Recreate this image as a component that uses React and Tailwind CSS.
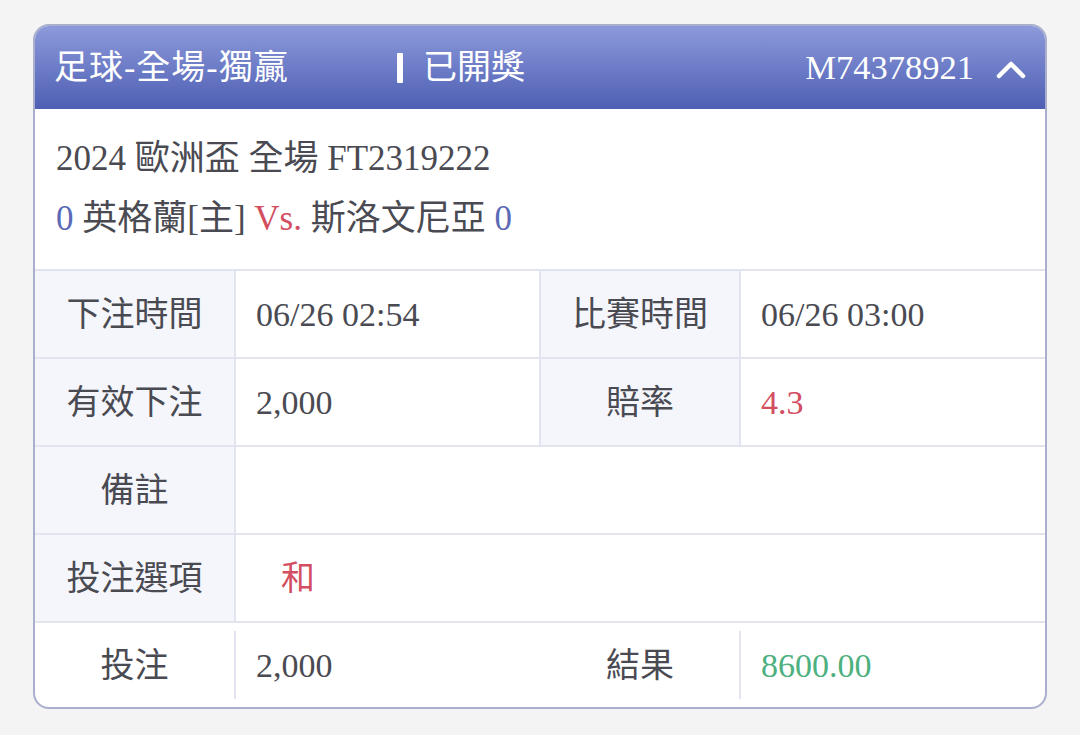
import React from "react";

const F = { fontFamily: '"Liberation Serif", "Noto Sans CJK TC", serif' };

function Chevron() {
  return (
    <svg width="32" height="24" viewBox="0 0 32 24" className="block">
      <polyline points="4,20 16,8 28,20" fill="none" stroke="white" strokeWidth="4.5" strokeLinecap="round" strokeLinejoin="round" />
    </svg>
  );
}

export default function App() {
  return (
    <div className="min-h-[735px] w-[1080px] bg-[#f4f4f5] pt-[24px] pl-[33px] text-[#4a4a52]" style={F}>
      <div className="w-[1014px] rounded-[16px] border-2 border-[#a9afcc] bg-white overflow-hidden">
        {/* header */}
        <div className="h-[85px] flex items-center bg-gradient-to-b from-[#8e9bdb] to-[#4f5fb3] text-white pl-[21px] pr-[20px] -mt-[2px] -mx-[2px] pt-[2px]">
          <div className="w-[343px] text-[34px] leading-none tracking-[1px]">足球-全場-獨贏</div>
          <div className="flex items-center gap-[20px]">
            <span className="w-[6px] h-[30px] bg-white rounded-[1px]"></span>
            <span className="text-[34px] leading-none">已開獎</span>
          </div>
          <div className="ml-auto flex items-center gap-[21px]">
            <span className="text-[34.5px] leading-none">M74378921</span>
            <Chevron />
          </div>
        </div>
        {/* info */}
        <div className="h-[160px] pl-[21px] pt-[20px] text-[35px] leading-[60px]">
          <div>2024 歐洲盃 全場 FT2319222</div>
          <div>
            <span className="text-[#5a6ab6]">0</span> 英格蘭[主] <span className="text-[#d24e60]">Vs.</span> 斯洛文尼亞 <span className="text-[#5a6ab6]">0</span>
          </div>
        </div>
        {/* table */}
        <div className="text-[34px]">
          <div className="grid grid-cols-[201px_305px_200px_1fr] h-[88px] border-t-2 border-[#e2e4f0]">
            <div className="bg-[#f5f6fb] flex items-center justify-center border-r-2 border-[#e2e4f0]">下注時間</div>
            <div className="flex items-center pl-[20px] border-r-2 border-[#e2e4f0]">06/26 02:54</div>
            <div className="bg-[#f5f6fb] flex items-center justify-center border-r-2 border-[#e2e4f0]">比賽時間</div>
            <div className="flex items-center pl-[20px]">06/26 03:00</div>
          </div>
          <div className="grid grid-cols-[201px_305px_200px_1fr] h-[88px] border-t-2 border-[#e2e4f0]">
            <div className="bg-[#f5f6fb] flex items-center justify-center border-r-2 border-[#e2e4f0]">有效下注</div>
            <div className="flex items-center pl-[20px] border-r-2 border-[#e2e4f0]">2,000</div>
            <div className="bg-[#f5f6fb] flex items-center justify-center border-r-2 border-[#e2e4f0]">賠率</div>
            <div className="flex items-center pl-[20px] text-[#d24e60]">4.3</div>
          </div>
          <div className="grid grid-cols-[201px_1fr] h-[88px] border-t-2 border-[#e2e4f0]">
            <div className="bg-[#f5f6fb] flex items-center justify-center border-r-2 border-[#e2e4f0]">備註</div>
            <div></div>
          </div>
          <div className="grid grid-cols-[201px_1fr] h-[88px] border-t-2 border-[#e2e4f0]">
            <div className="bg-[#f5f6fb] flex items-center justify-center border-r-2 border-[#e2e4f0]">投注選項</div>
            <div className="flex items-center pl-[45px] text-[#d24e60]">和</div>
          </div>
          <div className="grid grid-cols-[201px_305px_200px_1fr] h-[86px] border-t-2 border-[#e2e4f0] items-center">
            <div className="flex items-center justify-center h-[68px] border-r-2 border-[#e2e4f0]">投注</div>
            <div className="flex items-center pl-[20px]">2,000</div>
            <div className="flex items-center justify-center h-[68px] border-r-2 border-[#e2e4f0]">結果</div>
            <div className="flex items-center pl-[20px] text-[#4db07e]">8600.00</div>
          </div>
        </div>
      </div>
    </div>
  );
}
